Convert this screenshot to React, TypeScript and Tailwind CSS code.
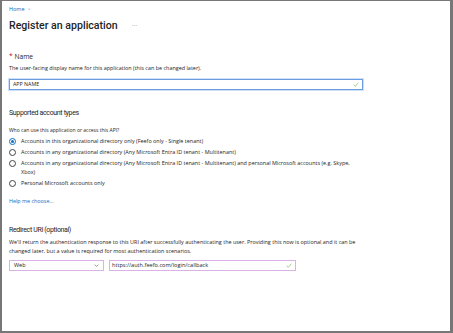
const font = { fontFamily: '"Open Sans", "Noto Sans", sans-serif' };
const head = { fontFamily: 'Roboto, "Open Sans", sans-serif' };

function Check({ className }: { className: string }) {
  return (
    <svg viewBox="0 0 10 8" className={className} fill="none">
      <path d="M1 4.5 L3.8 7 L9 1" stroke="#7fbf5c" strokeWidth="1.2" />
    </svg>
  );
}

function Radio({ checked, children }: { checked?: boolean; children: React.ReactNode }) {
  return (
    <div className="flex items-start gap-[5px]">
      <span className="flex h-[11px] items-center">
        <span
          className={
            "flex h-[7px] w-[7px] shrink-0 items-center justify-center rounded-full border-[0.8px] " +
            (checked ? "border-[#0f6cbd]" : "border-[#444]")
          }
        >
          {checked && <span className="h-[3px] w-[3px] rounded-full bg-[#0f6cbd]" />}
        </span>
      </span>
      <span className="pt-[1px] leading-[9px]">{children}</span>
    </div>
  );
}

export default function App() {
  return (
    <div
      className="h-[333px] w-[453px] overflow-hidden border-t-[1px] border-l-[2px] border-r-[3px] border-b-[2px] border-[#777] bg-white text-[#242424]"
      style={font}
    >
      <div className="px-[7px] pt-[4px]">
        <div className="flex h-[8px] items-center gap-[3px] text-[5.5px] text-[#0f6cbd]">
          Home <span className="text-[#999]">&gt;</span>
        </div>
        <div className="mt-[6px] flex h-[14px] items-center gap-[14px]">
          <h1 className="text-[10.6px] font-medium leading-[14px]" style={head}>Register an application</h1>
          <span className="text-[7px] text-[#999]">···</span>
        </div>

        <div className="mt-[20px] text-[6.7px] leading-[8px]">
          <span className="text-[#c50f1f]">*</span> Name
        </div>
        <p className="mt-[4px] text-[5.45px] leading-[7px]">
          The user-facing display name for this application (this can be changed later).
        </p>
        <div className="mt-[7px] flex h-[11px] w-[354px] items-center justify-between border border-[#6b9be0] px-[3px] text-[5.3px] shadow-[0_0_0_1px_#cfe0f7]">
          <span>APP NAME</span>
          <Check className="h-[5px] w-[6px]" />
        </div>

        <h2 className="mt-[18px] text-[7px] leading-[10px] tracking-[-0.35px]" style={head}>Supported account types</h2>
        <p className="mt-[9px] text-[5px] leading-[7px]">Who can use this application or access this API?</p>
        <div className="mt-[2px] flex flex-col text-[5.45px]">
          <Radio checked>Accounts in this organizational directory only (Feefo only - Single tenant)</Radio>
          <Radio>Accounts in any organizational directory (Any Microsoft Entra ID tenant - Multitenant)</Radio>
          <Radio>
            Accounts in any organizational directory (Any Microsoft Entra ID tenant - Multitenant) and personal Microsoft accounts (e.g. Skype,
            <br />
            Xbox)
          </Radio>
          <div className="mt-[1px]">
            <Radio>Personal Microsoft accounts only</Radio>
          </div>
        </div>

        <div className="mt-[8px] text-[5.4px] leading-[8px] text-[#0f6cbd]">Help me choose...</div>

        <h2 className="mt-[20px] text-[7px] leading-[10px] tracking-[-0.35px]" style={head}>Redirect URI (optional)</h2>
        <p className="mt-[3px] text-[5.44px] leading-[9px]">
          We'll return the authentication response to this URI after successfully authenticating the user. Providing this now is optional and it can be
          <br />
          changed later, but a value is required for most authentication scenarios.
        </p>
        <div className="mt-[4px] flex gap-[5px] text-[5.5px]">
          <div className="flex h-[11px] w-[95px] items-center justify-between border border-[#d9b3e6] px-[4px]">
            <span>Web</span>
            <svg viewBox="0 0 8 5" className="h-[3px] w-[5px]" fill="none">
              <path d="M1 1 L4 4 L7 1" stroke="#555" strokeWidth="1" />
            </svg>
          </div>
          <div className="flex h-[11px] w-[187px] items-center justify-between border border-[#d9b3e6] pl-[2px] pr-[3px] text-[5.6px]">
            <span>https://auth.feefo.com/login/callback</span>
            <Check className="h-[5px] w-[6px]" />
          </div>
        </div>
      </div>
    </div>
  );
}
